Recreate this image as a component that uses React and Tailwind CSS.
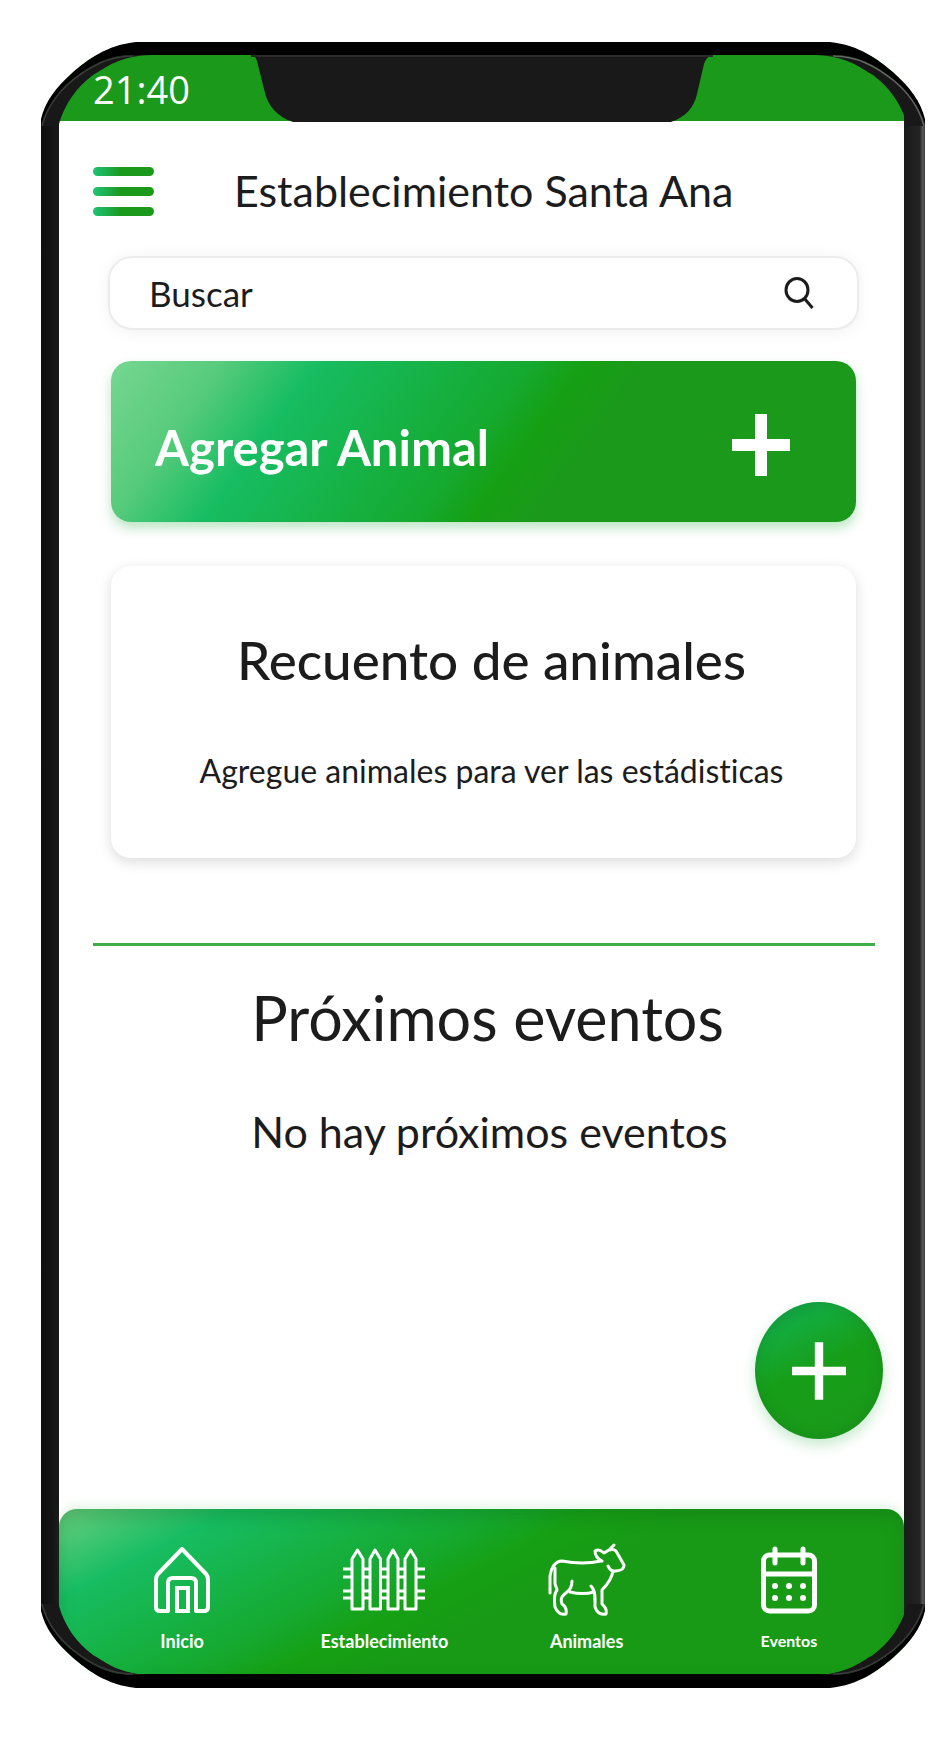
function Corner({ className, edge = "stroke-[#3a3a3a]" }) {
  return (
    <svg aria-hidden="true" viewBox="0 0 110 84" className={`pointer-events-none absolute h-[84px] w-[110px] ${className}`}>
      <path d="M0 82C6 64 16 50 32 37C50 23 68 13 92 13H110C78 14 66 25 52 33C36 45 24 61 18 82V84H0Z" fill="#181818" />
      <path d="M0 77C4 60 15 45 32 30C46 18 66 3 95 0H110V13H92C68 13 50 23 32 37C16 50 6 64 0 82Z" fill="#000" />
      <path d="M1 84C6 65 16 51 32 38C50 24 68 14 92 14" fill="none" strokeWidth="1.500" className={edge} />
      <path d="M0 0H95C66 3 46 18 32 30C15 45 4 60 0 77Z" fill="#fff" />
    </svg>
  );
}

function Notch() {
  return (
    <svg aria-hidden="true" viewBox="0 0 462 68" className="absolute top-0 left-1/2 h-[68px] w-[462px] -translate-x-1/2">
      <path d="M0 0C5 1 6 5 7 10L14 38C17 50 26 62 42 67H420C434 62 443 53 446 39L453 9C455 3 458 1 462 0Z" fill="#191919" />
      <path d="M0 1H462" stroke="#2b2b2b" strokeWidth="2" />
    </svg>
  );
}

function HomeIcon() {
  return (
    <svg aria-hidden="true" viewBox="0 0 56 66" className="h-[66px] w-14" fill="none" stroke="#fff" strokeWidth="4" strokeLinejoin="round">
      <path d="M28 2L52 27Q54 29 54 33V60Q54 64 50 64H42V36Q42 31 37 31H19Q14 31 14 36V64H6Q2 64 2 60V33Q2 29 4 27Z" />
      <path d="M23 41H34V64H23Z" strokeLinejoin="miter" />
    </svg>
  );
}

function FenceIcon() {
  return (
    <svg aria-hidden="true" viewBox="0 0 82 64" className="h-16 w-[82px]" fill="none" stroke="#fff" strokeWidth="3">
      <path d="M0 21H9M0 29H9M0 43H9M0 50H9M20 21H27M20 29H27M20 43H27M20 50H27M37 21H45M37 29H45M37 43H45M37 50H45M55 21H62M55 29H62M55 43H62M55 50H62M73 21H82M73 29H82M73 43H82M73 50H82" />
      <path d="M9 61V11L14.500 2L20 11V61ZM27 61V11L32 2L37.500 11V61ZM45 61V11L50 2L55 11V61ZM62 61V11L67.500 2L73 11V61Z" strokeLinejoin="round" />
    </svg>
  );
}

function CowIcon() {
  return (
    <svg aria-hidden="true" viewBox="0 0 78 74" className="h-[74px] w-[78px]" fill="none" stroke="#fff" strokeWidth="3" strokeLinecap="round" strokeLinejoin="round">
      <path d="M53 18C40 21 24 20 14 18C7 18 3 25 2 33V50" />
      <path d="M7 25V40C7 43 9 45 9 47C6 51 6 57 7 64C9 69 13 72 18 71C19 66 17 63 14 61C12 55 14 53 19 49C23 46 24 42 24 38" />
      <path d="M22 49C30 51 39 51 46 49" />
      <path d="M43 43C48 48 47 57 47 64C49 70 53 72 58 71C59 66 57 64 54 61V47C60 41 64 34 65 28" />
      <path d="M60 23C62 27 64 29 67 28C72 28 76 26 76 22L68 8C66 6 64 6 61 7L56 10C53 7 50 6 47 8C47 13 50 16 54 18M61 7L66 2" />
    </svg>
  );
}

function CalendarIcon() {
  return (
    <svg aria-hidden="true" viewBox="0 0 56 68" className="h-[68px] w-14" fill="none" stroke="#fff" strokeWidth="5" strokeLinecap="round">
      <rect x="2.500" y="9" width="51" height="56" rx="6" />
      <path d="M3 28H53M14 3V17M42 3V17" />
      <path d="M14 40V40.010M28 40V40.010M42 40V40.010M14 52V52.010M28 52V52.010M42 52V52.010" strokeWidth="6" />
    </svg>
  );
}

function Plus({ className, strokeWidth }) {
  return (
    <svg aria-hidden="true" viewBox="0 0 58 62" className={className} stroke="#fff" strokeWidth={strokeWidth}>
      <path d="M29 0V62M0 31H58" />
    </svg>
  );
}

const tabs = [
  { label: "Inicio", Icon: HomeIcon },
  { label: "Establecimiento", Icon: FenceIcon },
  { label: "Animales", Icon: CowIcon },
  { label: "Eventos", Icon: CalendarIcon, size: "text-base" },
];

export default function App() {
  return (
    <div className="min-h-screen bg-white pt-[42px] pr-[27px] pb-14 pl-[41px] font-[Lato,sans-serif] text-[#1c1c1c] [font-variant-ligatures:none]">
      <div className="relative flex min-h-[1646px] flex-col bg-black pt-[13px] pb-[14px]">
        <div className="flex grow">
          <div className="w-[18px] shrink-0 bg-linear-to-r from-[#0e0e0e] to-[#191919]" />

          <div className="relative flex min-w-0 grow flex-col bg-white">
            <div className="relative h-[66px] shrink-0 bg-[#1b991b] pl-[34px]">
              <time className="block pt-[6px] font-['Open_Sans',sans-serif] text-[38px] leading-[56px] font-medium text-white">21:40</time>
              <Notch />
            </div>

            <header className="flex items-center pt-[38px] pl-[34px]">
              <button type="button" aria-label="Menú" className="flex w-[61px] shrink-0 flex-col gap-[11px]">
                <span className="h-[9px] rounded-full bg-linear-to-r from-[#20c573] to-[#1b991b] to-45%" />
                <span className="h-[9px] rounded-full bg-linear-to-r from-[#20c573] to-[#1b991b] to-45%" />
                <span className="h-[9px] rounded-full bg-linear-to-r from-[#20c573] to-[#1b991b] to-45%" />
              </button>
              <h1 className="pl-20 text-[43px] leading-[64px] whitespace-nowrap">Establecimiento Santa Ana</h1>
            </header>

            <main className="flex flex-col pr-12 pl-[52px]">
              <label className="mt-[33px] -mr-[3px] -ml-[3px] flex h-[74px] items-center rounded-[24px] border-2 border-[#ececec] bg-white pr-[43px] pl-[39px] shadow-[0_2px_16px_rgba(0,0,0,0.06)]">
                <input type="search" aria-label="Buscar" placeholder="Buscar" className="min-w-0 grow bg-transparent text-[35px] leading-[48px] outline-none placeholder:text-[#1c1c1c] placeholder:opacity-100" />
                <svg aria-hidden="true" viewBox="0 0 30 32" className="h-8 w-[30px]" fill="none" stroke="#1c1c1c" strokeWidth="3">
                  <ellipse cx="13" cy="13" rx="11" ry="11.500" />
                  <path d="M20 21L28.500 31" />
                </svg>
              </label>

              <button type="button" className="mt-[31px] flex h-[161px] items-center justify-between rounded-[20px] bg-[linear-gradient(126deg,#76d790_0%,#58cb7c_13%,#17bd62_24%,#15a92f_49%,#16a014_55%,#1b991b_63%)] pt-[6px] pr-[66px] pl-11 text-[49px] leading-[60px] font-bold text-white shadow-[0_6px_12px_rgba(30,170,60,0.3)]">
                <span className="pt-1">Agregar Animal</span>
                <Plus className="h-[62px] w-[58px]" strokeWidth="12" />
              </button>

              <section className="mt-11 flex flex-col items-center rounded-[20px] bg-white pt-[62px] pb-[64px] pl-4 text-center shadow-[0_4px_14px_rgba(0,0,0,0.14)]">
                <h2 className="text-[53px] leading-[64px] font-medium">Recuento de animales</h2>
                <p className="mt-14 text-[32px] leading-[46px]">Agregue animales para ver las estádisticas</p>
              </section>
            </main>

            <hr className="mt-[85px] mr-[29px] ml-[34px] border-t-[3px] border-[#3fae48]" />

            <section className="flex flex-col items-center pt-8 pl-3 text-center">
              <h2 className="text-[61px] leading-[80px]">Próximos eventos</h2>
              <p className="mt-[42px] pl-1 text-[43px] leading-[64px]">No hay próximos eventos</p>
            </section>

            <button type="button" aria-label="Agregar evento" className="mt-auto mr-[21px] mb-[70px] flex h-[137px] w-32 items-center justify-center self-end rounded-[50%] bg-[linear-gradient(155deg,#149f4d_0%,#14ab3c_22%,#179e18_48%,#1b991b_100%)] shadow-[0_6px_14px_rgba(30,170,60,0.25),inset_0_0_14px_rgba(20,90,30,0.25)]">
              <Plus className="h-[58px] w-[54px]" strokeWidth="9" />
            </button>

            <nav className="flex h-[165px] shrink-0 rounded-t-[18px] bg-[linear-gradient(153deg,#6bcf82_0%,#17bd62_15%,#15a92f_38%,#16a014_46%,#189a16_55%)] pr-[14px] pl-[22px] shadow-[0_-4px_10px_rgba(30,170,60,0.12),inset_0_8px_16px_rgba(15,90,25,0.25)]">
              {tabs.map(({ label, Icon, size = "text-lg" }) => (
                <a key={label} href="#" className="flex flex-1 flex-col items-center pt-[34px] font-bold text-white">
                  <span className="flex h-[74px] items-center">
                    <Icon />
                  </span>
                  <span className={`mt-3 ${size} leading-6`}>{label}</span>
                </a>
              ))}
            </nav>
          </div>

          <div className="w-[21px] shrink-0 bg-[linear-gradient(to_right,#191919_0%,#242424_75%,#5a5a5a_90%,#3a3a3a_100%)]" />
        </div>

        <Corner className="top-0 left-0" />
        <Corner className="top-0 right-0 -scale-x-100" edge="stroke-[#666]" />
        <Corner className="bottom-0 left-0 -scale-y-100" />
        <Corner className="right-0 bottom-0 -scale-100" />
      </div>
    </div>
  );
}
